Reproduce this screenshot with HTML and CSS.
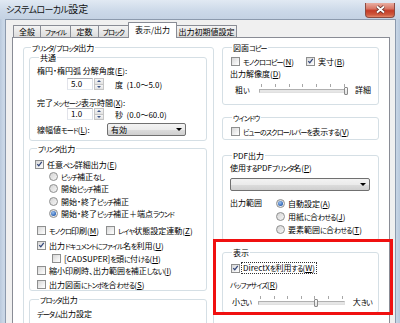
FILE: index.html
```html
<!DOCTYPE html>
<html lang="ja">
<head>
<meta charset="utf-8">
<title>システムローカル設定</title>
<link rel="stylesheet" href="styles.css">
</head>
<body>
<div class="window">
  <div class="titlebar">
    <span class="title"><span class="k">システムローカル</span>設定</span>
    <span class="close"><svg width="11" height="9" viewBox="0 0 11 9"><path d="M2 1.5 L9 7.5 M9 1.5 L2 7.5" stroke="#5a2e28" stroke-width="3.4"/><path d="M2 1.5 L9 7.5 M9 1.5 L2 7.5" stroke="#fff" stroke-width="1.8"/></svg></span>
  </div>
  <div class="client">
    <div class="tabs">
      <span class="tab t1">全般</span>
      <span class="tab t2"><span class="k">ファイル</span></span>
      <span class="tab t3">定数</span>
      <span class="tab t4"><span class="k">ブロック</span></span>
      <span class="tab sel">表示/出力</span>
      <span class="tab t6">出力初期値設定</span>
    </div>
    <div class="page">
      <div class="col">
        <div class="grp outer">
          <span class="cap"><span class="k">プリンタ</span>/<span class="k">プロッタ</span>出力</span>
          <div class="grp common">
            <span class="cap">共通</span>
            <div class="line l-angle">楕円・楕円弧 分解角度(<u>E</u>):</div>
            <div class="spinrow s1">
              <span class="spin"><span class="edit">5.0</span><span class="arrows"><i class="up"></i><i class="dn"></i></span></span>
              <span class="unit">度&nbsp; (1.0～5.0)</span>
            </div>
            <div class="line l-time">完了<span class="k">メッセージ</span>表示時間(<u>X</u>):</div>
            <div class="spinrow s2">
              <span class="spin"><span class="edit">1.0</span><span class="arrows"><i class="up"></i><i class="dn"></i></span></span>
              <span class="unit">秒&nbsp; (0.0～60.0)</span>
            </div>
            <div class="comborow">
              <span class="clabel">線幅値<span class="k">モード</span>(<u>L</u>):</span>
              <span class="combo c-mode"><span>有効</span><i class="drop"></i></span>
            </div>
          </div>
          <div class="grp printer">
            <span class="cap"><span class="k">プリンタ</span>出力</span>
            <div class="row r-pen"><span class="cb on"><svg viewBox="0 0 9 9"><path d="M1.6 4.6 L3.6 6.8 L7.4 1.8" fill="none" stroke="#33477a" stroke-width="1.6"/></svg></span><span>任意<span class="k">ペン</span>詳細出力(<u>E</u>)</span></div>
            <div class="rrow"><span class="rb"></span><span><span class="k">ピッチ</span>補正<span class="k">なし</span></span></div>
            <div class="rrow"><span class="rb"></span><span>開始<span class="k">ピッチ</span>補正</span></div>
            <div class="rrow"><span class="rb"></span><span>開始・終了<span class="k">ピッチ</span>補正</span></div>
            <div class="rrow"><span class="rb on"><i></i></span><span>開始・終了<span class="k">ピッチ</span>補正＋端点<span class="k">ラウンド</span></span></div>
            <div class="row r-mono">
              <span class="pair"><span class="cb"></span><span><span class="k">モノクロ</span>印刷(<u>M</u>)</span></span>
              <span class="pair"><span class="cb"></span><span><span class="k">レイヤ</span>状態設定連動(<u>Z</u>)</span></span>
            </div>
            <div class="row r-doc"><span class="cb on"><svg viewBox="0 0 9 9"><path d="M1.6 4.6 L3.6 6.8 L7.4 1.8" fill="none" stroke="#33477a" stroke-width="1.6"/></svg></span><span>出力<span class="k">ドキュメントにファイル</span>名<span class="k">を</span>利用(<u>U</u>)</span></div>
            <div class="row r-cad"><span class="cb"></span><span>[CADSUPER]<span class="k">を</span>頭<span class="k">に</span>付<span class="k">ける</span>(<u>H</u>)</span></div>
            <div class="row r-shrink"><span class="cb"></span><span>縮小印刷時、出力範囲<span class="k">を</span>補正<span class="k">しない</span>(<u>I</u>)</span></div>
            <div class="row r-tombo"><span class="cb"></span><span>出力図面<span class="k">にトンボを</span>合<span class="k">わせる</span>(<u>S</u>)</span></div>
          </div>
          <div class="grp plotter">
            <span class="cap"><span class="k">プロッタ</span>出力</span>
            <div class="line l-datum"><span class="k">データム</span>出力設定</div>
          </div>
        </div>
      </div>
      <div class="col">
        <div class="grp g-copy">
          <span class="cap">図面<span class="k">コピー</span></span>
          <div class="row r-copy">
            <span class="pair p-mono"><span class="cb"></span><span><span class="k">モノクロコピー</span>(<u>N</u>)</span></span>
            <span class="pair"><span class="cb on"><svg viewBox="0 0 9 9"><path d="M1.6 4.6 L3.6 6.8 L7.4 1.8" fill="none" stroke="#33477a" stroke-width="1.6"/></svg></span><span>実寸(<u>B</u>)</span></span>
          </div>
          <div class="line l-res">出力解像度(<u>D</u>)</div>
          <div class="sliderrow sr-res">
            <span class="slabel">粗<span class="k">い</span></span>
            <span class="slider">
              <span class="ticks"><i></i><i></i><i></i><i></i><i></i><i></i><i></i></span>
              <span class="track"><span class="thumb" style="left: 84px"></span></span>
            </span>
            <span class="slabel">詳細</span>
          </div>
        </div>
        <div class="grp g-win">
          <span class="cap"><span class="k">ウインドウ</span></span>
          <div class="row r-view"><span class="cb"></span><span><span class="k">ビューのスクロールバーを</span>表示<span class="k">する</span>(<u>V</u>)</span></div>
        </div>
        <div class="grp g-pdf">
          <span class="cap">PDF出力</span>
          <div class="line l-pdfname">使用<span class="k">する</span>PDF<span class="k">プリンタ</span>名(<u>P</u>)</div>
          <span class="combo c-pdf"><span></span><i class="drop"></i></span>
          <div class="range">
            <span class="rlabel">出力範囲</span>
            <div class="ropts">
              <div class="rrow"><span class="rb on"><i></i></span><span>自動設定(<u>A</u>)</span></div>
              <div class="rrow"><span class="rb"></span><span>用紙<span class="k">に</span>合<span class="k">わせる</span>(<u>J</u>)</span></div>
              <div class="rrow"><span class="rb"></span><span>要素範囲<span class="k">に</span>合<span class="k">わせる</span>(<u>T</u>)</span></div>
            </div>
          </div>
        </div>
        <div class="grp g-disp">
          <span class="cap">表示</span>
          <div class="row r-dx"><span class="cb on"><svg viewBox="0 0 9 9"><path d="M1.6 4.6 L3.6 6.8 L7.4 1.8" fill="none" stroke="#33477a" stroke-width="1.6"/></svg></span><span class="focus">DirectX<span class="k">を</span>利用<span class="k">する</span>(<u>W</u>)</span></div>
          <div class="line l-buf"><span class="k">バッファサイズ</span>(<u>R</u>)</div>
          <div class="sliderrow sr-buf">
            <span class="slabel">小<span class="k">さい</span></span>
            <span class="slider">
              <span class="ticks"><i></i><i></i><i></i><i></i><i></i><i></i><i></i></span>
              <span class="track"><span class="thumb" style="left: 55px"></span></span>
            </span>
            <span class="slabel">大<span class="k">きい</span></span>
          </div>
        </div>
      </div>
    </div>
  </div>
  <div class="highlight"></div>
</div>
</body>
</html>
```

FILE: styles.css
```css
* { box-sizing: border-box; }
html, body { margin: 0; padding: 0; }
body {
  width: 400px;
  height: 323px;
  overflow: hidden;
  font-family: "Noto Sans CJK JP", "Noto Sans", sans-serif;
  font-size: 8px;
  color: #000;
  font-feature-settings: "palt" 1;
  background: #c5d3e4;
}
u { text-decoration: underline; text-underline-offset: 1px; }
i { display: block; font-style: normal; }
.k { font-size: 7px; letter-spacing: -0.8px; }

.window {
  position: relative;
  width: 400px;
  height: 323px;
  overflow: hidden;
  display: flex;
  flex-direction: column;
  padding: 0 4px 0 5px;
  background: linear-gradient(to right, #b9c9dc 0, #c8d6e6 3px, #c8d6e6 396px, #b9c9dc 400px);
}

.titlebar {
  height: 19px;
  flex: none;
  margin: 0 -4px 0 -5px;
  padding: 0 5px 0 6px;
  display: flex;
  align-items: center;
  justify-content: space-between;
  background: linear-gradient(#e1e9f3, #cbd8e8 60%, #c4d2e3);
}
.title { font-size: 10px; line-height: 12px; color: #101010; white-space: nowrap; }
.title .k { font-size: 9px; letter-spacing: -0.6px; }
.close {
  width: 30px;
  height: 15px;
  margin-top: 1px;
  display: flex;
  align-items: center;
  justify-content: center;
  border: 1px solid #8b4a40;
  border-top: none;
  border-radius: 0 0 4px 4px;
  background: linear-gradient(#e9aea2 0, #d87766 40%, #c43b26 55%, #cf5a3f 85%, #e48a6c 100%);
}

.client {
  flex: 1;
  display: flex;
  flex-direction: column;
  background: #f0f0f0;
  border: 1px solid #8c9aad;
  border-bottom: none;
  padding: 2px 5px 0 6px;
}

.tabs {
  height: 15px;
  flex: none;
  display: flex;
  align-items: flex-end;
  padding-left: 1px;
}
.tab {
  height: 12px;
  margin-right: -1px;
  border: 1px solid #898c95;
  border-bottom: none;
  border-radius: 1px 1px 0 0;
  background: linear-gradient(#f4f4f4, #e8e8e8 50%, #dcdcdc);
  display: flex;
  align-items: center;
  justify-content: center;
  line-height: 10px;
  white-space: nowrap;
}
.t1 { width: 28px; }
.t2 { width: 31px; }
.t3 { width: 29px; }
.t4 { width: 31px; }
.t6 { width: 61px; }
.tab.sel {
  width: 49px;
  height: 16px;
  margin-bottom: -1px;
  background: #fff;
  position: relative;
  z-index: 2;
  padding-bottom: 2px;
}

.page {
  flex: 1;
  background: #fff;
  border: 1px solid #898c95;
  padding: 9px 9px 0 10px;
  display: grid;
  grid-template-columns: 191px 157px;
  column-gap: 8px;
  align-items: start;
}

.grp {
  border: 1px solid #d5dfe5;
  border-radius: 3px;
  box-shadow: inset 1px 1px 0 #fff;
}
.cap {
  display: block;
  width: max-content;
  height: 10px;
  line-height: 10px;
  margin: -5px 0 0 2px;
  padding: 0 1px;
  background: #fff;
  white-space: nowrap;
}

.line { height: 11px; line-height: 11px; white-space: nowrap; }
.row { height: 12px; display: flex; align-items: center; gap: 3px; white-space: nowrap; }
.pair { display: flex; align-items: center; gap: 3px; }
.rrow { height: 12.5px; display: flex; align-items: center; gap: 3px; white-space: nowrap; }

/* checkbox */
.cb {
  flex: none;
  width: 9px;
  height: 9px;
  border: 1px solid #8e8f8f;
  background: linear-gradient(135deg, #d6d6d6, #f4f4f4 70%, #fff);
  display: flex;
  align-items: center;
  justify-content: center;
}
.cb svg { width: 8px; height: 8px; }

/* radio */
.rb {
  flex: none;
  width: 9px;
  height: 9px;
  border-radius: 50%;
  border: 1px solid #8e8f8f;
  background: linear-gradient(135deg, #d4d4d4, #f6f6f6);
  display: flex;
  align-items: center;
  justify-content: center;
}
.rb i {
  width: 5px;
  height: 5px;
  border-radius: 50%;
  background: radial-gradient(circle at 40% 35%, #9cc3f0, #2c63b5 70%, #1d4a8c);
}

/* left column */
.outer { padding: 0 6px 30px 5px; }
.common { margin-top: 4px; padding: 0 6px 4px 7px; }
.l-angle { margin-top: 2px; }
.spinrow { display: flex; align-items: center; height: 12px; padding-left: 30px; }
.s1 { margin-top: 2px; }
.s2 { margin-top: 0; }
.l-time { margin-top: 7px; }
.spin { display: flex; height: 12px; }
.edit {
  width: 26px;
  height: 12px;
  border: 1px solid #abadb3;
  border-color: #abadb3 #dbdfe6 #e3e9ef #e2e3ea;
  padding-left: 3px;
  line-height: 10px;
  background: #fff;
}
.arrows { width: 10px; display: flex; flex-direction: column; margin-left: 1px; }
.arrows i {
  flex: 1;
  border: 1px solid #c5c5c5;
  background: linear-gradient(#f6f6f6, #e2e2e2);
  display: flex;
  align-items: center;
  justify-content: center;
}
.arrows i + i { margin-top: -1px; }
.arrows i::after {
  content: "";
  width: 0;
  height: 0;
  border-left: 2px solid transparent;
  border-right: 2px solid transparent;
}
.arrows .up::after { border-bottom: 2px solid #3d5487; }
.arrows .dn::after { border-top: 2px solid #3d5487; }
.unit { margin-left: 11px; white-space: nowrap; }

.comborow { margin-top: 3px; display: flex; align-items: center; height: 13px; }
.clabel { width: 70px; white-space: nowrap; }
.combo {
  height: 13px;
  border: 1px solid #707070;
  border-radius: 2px;
  background: linear-gradient(#f3f3f3 0, #ebebeb 50%, #dddddd 51%, #cfcfcf 100%);
  display: flex;
  align-items: center;
  justify-content: space-between;
  padding: 0 3px 0 3px;
  line-height: 11px;
}
.c-mode { width: 79px; }
.drop {
  width: 0;
  height: 0;
  border-left: 3px solid transparent;
  border-right: 3px solid transparent;
  border-top: 3px solid #000;
}

.printer { margin-top: 7px; padding: 0 6px 0 5px; }
.r-pen { margin-top: 4px; }
.printer .rrow { padding-left: 14px; }
.printer .rrow:first-of-type { margin-top: 4px; }
.r-mono { margin-top: 4px; padding-left: 2px; gap: 0; }
.r-mono .pair:first-child { width: 69px; }
.r-doc { margin-top: 3px; padding-left: 2px; }
.r-cad { margin-top: 1px; padding-left: 17px; }
.r-shrink { margin-top: 0; padding-left: 2px; }
.r-tombo { margin-top: 3px; padding-left: 2px; height: 11px; }

.plotter { margin-top: 8px; padding: 0 6px 20px 7px; }
.l-datum { margin-top: 3px; }

/* right column */
.g-copy { padding: 0 6px 7px 7px; }
.r-copy { margin-top: 2px; gap: 0; padding-left: 1px; }
.p-mono { width: 75px; }
.l-res { margin-top: 1px; height: 12px; line-height: 12px; }
.sliderrow { display: flex; align-items: center; height: 16px; white-space: nowrap; }
.slabel { white-space: nowrap; }
.sr-res { margin-top: 1px; padding-left: 5px; }
.sr-res .slabel:first-child { width: 24px; }
.sr-res .slabel:last-child { margin-left: 8px; }
.slider { flex: none; width: 88px; height: 16px; display: flex; flex-direction: column; }
.ticks { height: 3px; margin-top: 3px; display: flex; justify-content: space-between; padding: 0 2px; }
.ticks i { width: 1px; height: 3px; background: #a7a7a7; }
.track {
  position: relative;
  margin-top: 2px;
  height: 4px;
  border: 1px solid #b5b5b5;
  border-color: #b0b0b0 #e0e0e0 #e0e0e0 #b0b0b0;
  background: #e6e6e6;
}
.thumb {
  position: absolute;
  top: -3px;
  width: 4px;
  height: 8px;
  border: 1px solid #8a8a8a;
  border-radius: 1px;
  background: linear-gradient(#fafafa, #dedede);
}

.g-win { margin-top: 12px; padding: 0 6px 2px 7px; }
.r-view { margin-top: 2px; padding-left: 1px; }

.g-pdf { margin-top: 15px; padding: 0 6px 4px 7px; }
.l-pdfname { margin-top: 1px; height: 12px; line-height: 12px; }
.c-pdf { margin-top: 4px; width: 140px; }
.range { display: flex; margin-top: 6px; }
.rlabel { width: 46px; height: 12px; line-height: 12px; white-space: nowrap; }
.ropts .rrow { height: 13px; }

.g-disp { margin-top: 11px; padding: 0 6px 3px 7px; }
.r-dx { margin-top: 4px; padding-left: 1px; gap: 2px; }
.focus { outline: 1px dotted #333; outline-offset: 0; padding: 0 1px; line-height: 9px; }
.l-buf { margin-top: 5px; height: 12px; line-height: 12px; }
.sr-buf { margin-top: 2px; padding-left: 2px; }
.sr-buf .slabel:first-child { width: 26px; }
.sr-buf .slider { width: 87px; }
.sr-buf .slabel:last-child { margin-left: 8px; }

.highlight {
  position: absolute;
  left: 213px;
  top: 239px;
  width: 180px;
  height: 76px;
  border: 3px solid #f01010;
}
```
